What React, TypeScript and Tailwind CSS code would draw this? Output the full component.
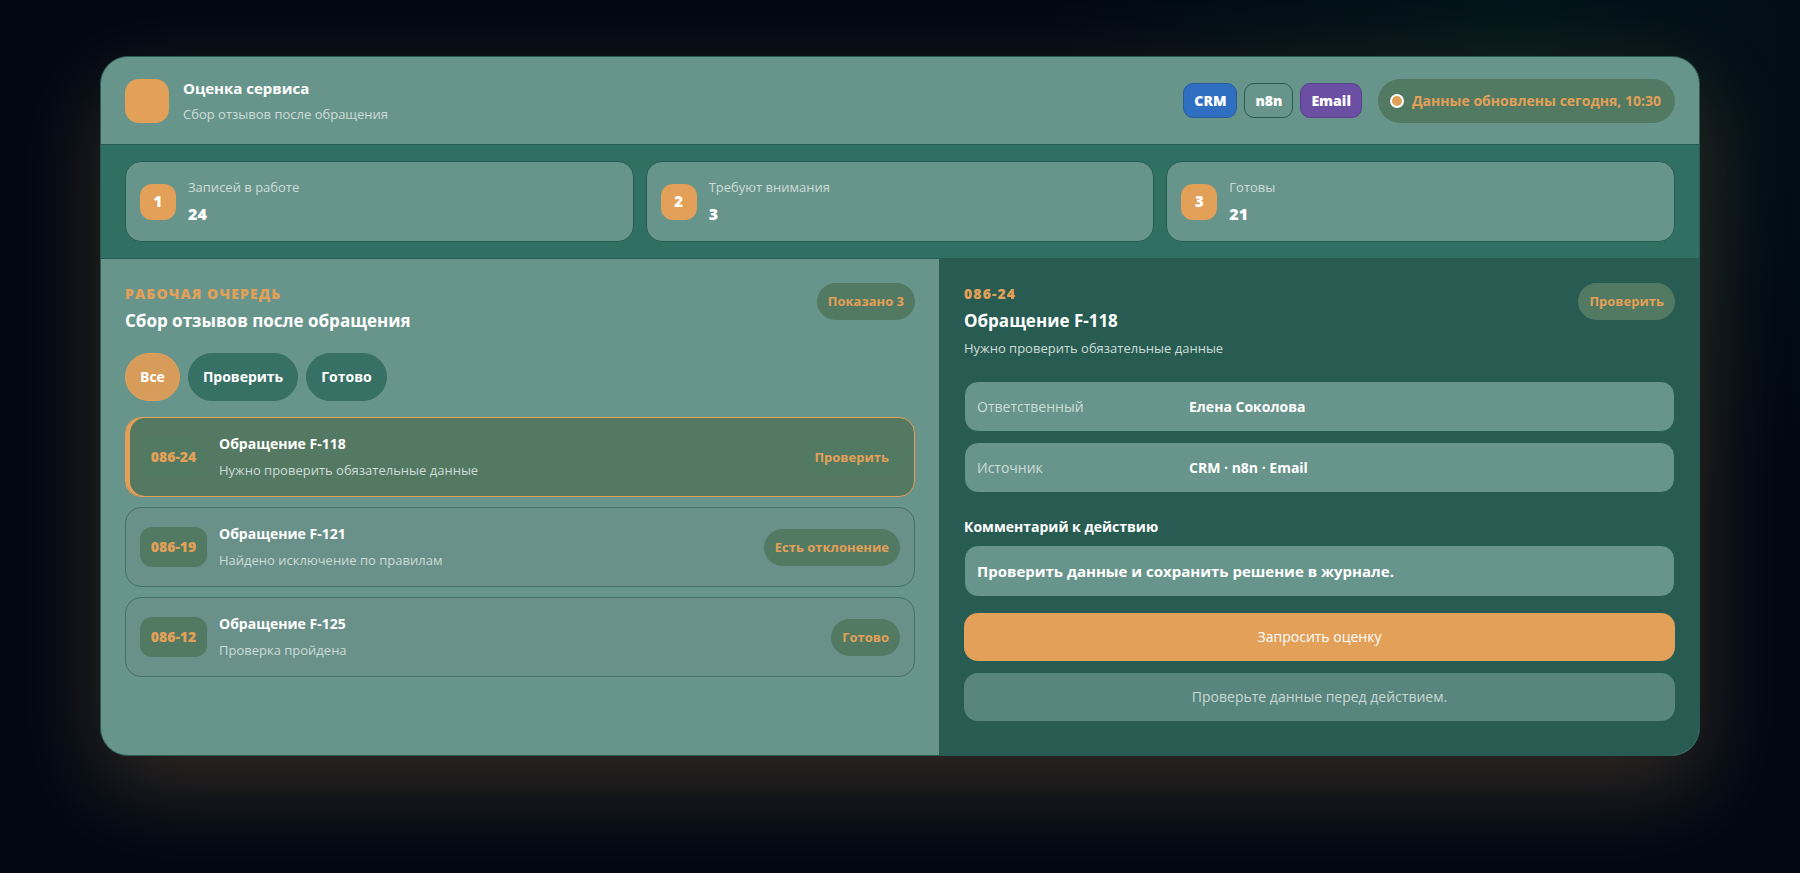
import React, { useState } from "react";

const stats = [
  { n: 1, label: "Записей в работе", value: "24" },
  { n: 2, label: "Требуют внимания", value: "3" },
  { n: 3, label: "Готовы", value: "21" },
];

const rows = [
  { code: "086-24", title: "Обращение F-118", note: "Нужно проверить обязательные данные", status: "Проверить" },
  { code: "086-19", title: "Обращение F-121", note: "Найдено исключение по правилам", status: "Есть отклонение" },
  { code: "086-12", title: "Обращение F-125", note: "Проверка пройдена", status: "Готово" },
];

const filters = ["Все", "Проверить", "Готово"];

function Pill({ children }: { children: React.ReactNode }) {
  return (
    <span className="shrink-0 rounded-full bg-[#527a62] px-[11px] py-2 text-[13px] leading-[21px] font-bold whitespace-nowrap text-[#e2a058]">
      {children}
    </span>
  );
}

function Field({ label, value }: { label: string; value: string }) {
  return (
    <div className="grid grid-cols-[200px_1fr] gap-3 rounded-[14px] border border-[#285c52] bg-[#68958b] px-3 py-3 text-sm leading-[25px]">
      <dt className="text-[#ccdcd7]">{label}</dt>
      <dd className="font-bold">{value}</dd>
    </div>
  );
}

export default function App() {
  const [filter, setFilter] = useState("Все");
  const [active, setActive] = useState("086-24");
  const [comment, setComment] = useState("Проверить данные и сохранить решение в журнале.");

  return (
    <main className="min-h-screen bg-[#010814] bg-[radial-gradient(circle_at_84%_8%,#03161b_0px,#03161b00_480px)] px-6 py-14 font-['Open_Sans','Noto_Sans',sans-serif] text-white">
      <div className="mx-auto max-w-[1600px] overflow-hidden rounded-[28px] border border-[#285c52] bg-[#68958b] shadow-[0_32px_90px_rgba(226,160,88,0.23)]">
        <header className="flex items-center justify-between border-b border-[#285c52] px-6 py-[18px]">
          <div className="flex items-center gap-[14px]">
            <span className="size-11 rounded-[14px] bg-[#e2a058]" />
            <div>
              <h1 className="text-[15px] leading-[27px] font-bold">Оценка сервиса</h1>
              <p className="text-[13px] leading-6 text-[#ccdcd7]">Сбор отзывов после обращения</p>
            </div>
          </div>
          <div className="flex items-center gap-4">
            <div className="flex gap-[7px] text-sm leading-[21px] font-extrabold">
              <span className="rounded-[10px] border border-[#2a5c9a] bg-[#2f6fc2] px-[10px] py-[6px]">CRM</span>
              <span className="rounded-[10px] border border-[#285c52] px-[10px] py-[6px]">n8n</span>
              <span className="rounded-[10px] border border-[#57418a] bg-[#6b4fa3] px-[10px] py-[6px]">Email</span>
            </div>
            <div className="flex items-center gap-2 rounded-full bg-[#527a62] py-[10px] pr-[14px] pl-3 text-sm leading-6 font-bold text-[#e2a058]">
              <span className="size-[14px] rounded-full border-2 border-white bg-[#e2a058]" />
              Данные обновлены сегодня, 10:30
            </div>
          </div>
        </header>

        <section className="grid grid-cols-3 gap-3 border-b border-[#285c52] bg-[#307064] px-6 py-4">
          {stats.map((s) => (
            <div key={s.n} className="flex items-center gap-3 rounded-2xl border border-[#285c52] bg-[#68958b] px-[14px] py-[13px]">
              <span className="grid size-9 place-items-center rounded-xl bg-[#e2a058] text-[15px] font-extrabold">{s.n}</span>
              <div>
                <p className="text-[13px] leading-[25px] text-[#ccdcd7]">{s.label}</p>
                <p className="text-base leading-7 font-extrabold">{s.value}</p>
              </div>
            </div>
          ))}
        </section>

        <div className="grid grid-cols-[419fr_380fr]">
          <section className="p-6">
            <div className="flex items-start justify-between">
              <div>
                <p className="text-sm leading-[22px] font-extrabold tracking-[0.08em] text-[#e2a058] uppercase">Рабочая очередь</p>
                <h2 className="mt-1 text-[17px] leading-[24px] font-bold">Сбор отзывов после обращения</h2>
              </div>
              <Pill>Показано 3</Pill>
            </div>

            <div className="mt-5 flex gap-2">
              {filters.map((f) => (
                <button
                  key={f}
                  type="button"
                  onClick={() => setFilter(f)}
                  className={`h-12 rounded-full border px-[14px] text-sm font-bold ${
                    f === filter ? "border-[#e2a058] bg-[#d89c5a]" : "border-[#3a6e63] bg-[#377166]"
                  }`}
                >
                  {f}
                </button>
              ))}
            </div>

            <div className="mt-4 flex flex-col gap-[10px]">
              {rows.map((r) => (
                <button
                  key={r.code}
                  type="button"
                  onClick={() => setActive(r.code)}
                  className={`flex w-full items-center gap-3 rounded-2xl border px-[14px] py-[13px] text-left ${
                    r.code === active
                      ? "border-[#e2a058] bg-[#547862] shadow-[inset_4px_0_0_#e2a058]"
                      : "border-[#427166] bg-[#699189]"
                  }`}
                >
                  <span className="w-[67px] rounded-xl bg-[#527a62] text-center text-sm leading-10 font-extrabold text-[#e2a058]">{r.code}</span>
                  <span className="flex-1">
                    <span className="block text-sm leading-[26px] font-bold">{r.title}</span>
                    <span className="block text-[13px] leading-[26px] text-[#ccdcd7]">{r.note}</span>
                  </span>
                  <Pill>{r.status}</Pill>
                </button>
              ))}
            </div>
          </section>

          <section className="border-l border-[#285c52] bg-[#285c52] p-6 pb-[34px]">
            <div className="flex items-start justify-between">
              <div>
                <p className="text-sm leading-[22px] font-extrabold tracking-[0.08em] text-[#e2a058]">086-24</p>
                <h2 className="mt-1 text-[17px] leading-[24px] font-bold">Обращение F-118</h2>
                <p className="mt-1 text-[13px] leading-[22px] text-[#ccdcd7]">Нужно проверить обязательные данные</p>
              </div>
              <Pill>Проверить</Pill>
            </div>

            <dl className="mt-[22px] flex flex-col gap-[10px]">
              <Field label="Ответственный" value="Елена Соколова" />
              <Field label="Источник" value="CRM · n8n · Email" />
            </dl>

            <label htmlFor="comment" className="mt-[22px] block text-sm leading-6 font-bold">Комментарий к действию</label>
            <input
              id="comment"
              value={comment}
              onChange={(e) => setComment(e.target.value)}
              className="mt-[6px] h-[52px] w-full rounded-[14px] border border-[#285c52] bg-[#68958b] px-3 text-[15px] font-bold"
            />
            <button type="button" className="mt-4 h-12 w-full rounded-[14px] bg-[#e2a058] text-sm">Запросить оценку</button>
            <button type="button" disabled className="mt-3 h-12 w-full rounded-[14px] bg-[#58857d] text-sm text-[#c8d8d4]">
              Проверьте данные перед действием.
            </button>
          </section>
        </div>
      </div>
    </main>
  );
}
